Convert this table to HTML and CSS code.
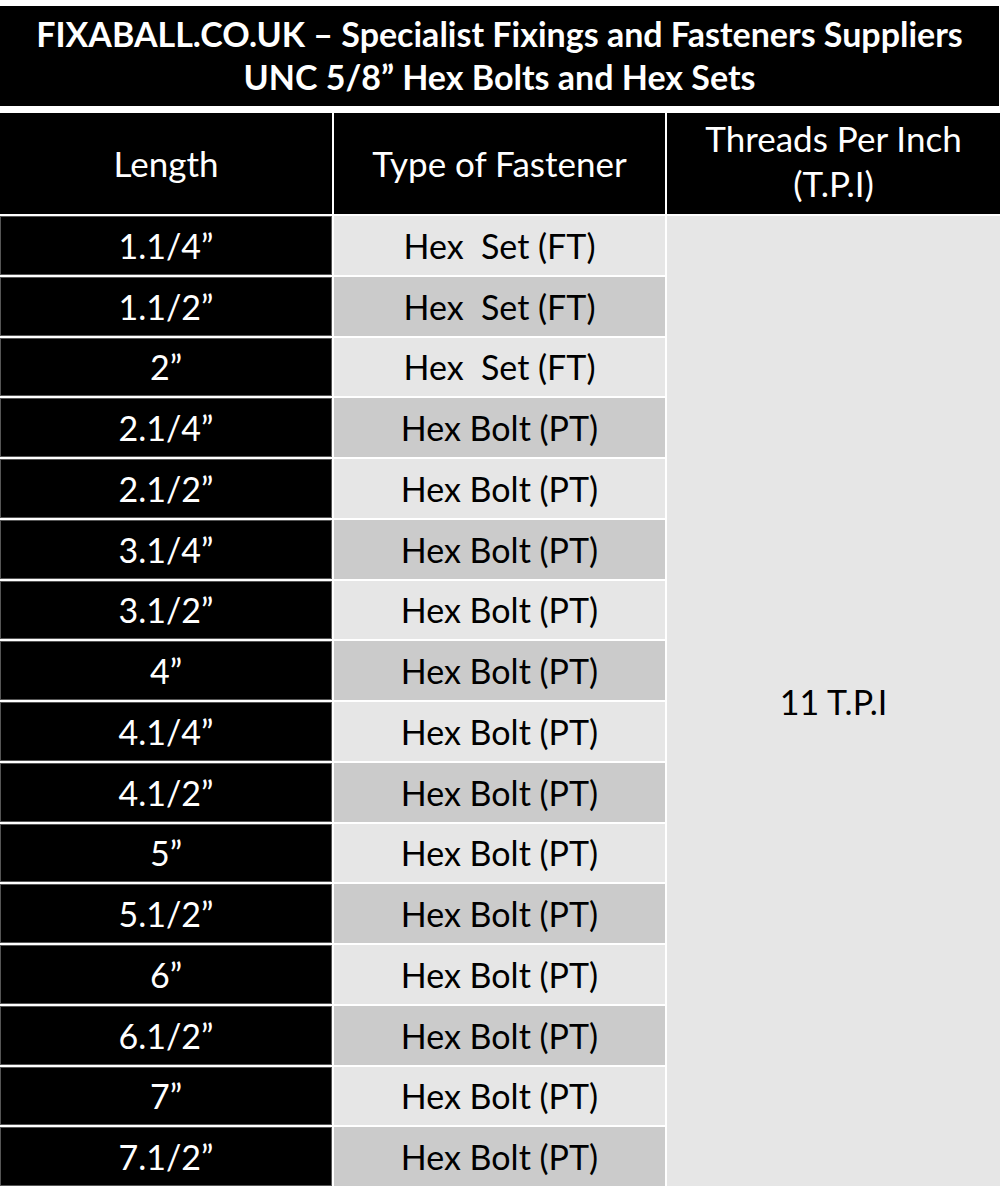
FILE: index.html
```html
<!DOCTYPE html>
<html lang="en">
<head>
<meta charset="utf-8">
<title>UNC 5/8" Hex Bolts and Hex Sets</title>
<link rel="stylesheet" href="styles.css">
</head>
<body>
<div class="sheet">
  <div class="title">
    <div>FIXABALL.CO.UK – Specialist Fixings and Fasteners Suppliers</div>
    <div>UNC 5/8” Hex Bolts and Hex Sets</div>
  </div>
  <div class="table">
    <div class="hd">Length</div>
    <div class="hd">Type of Fastener</div>
    <div class="hd hd-tpi">Threads Per Inch<br>(T.P.I)</div>

    <div class="len">1.1/4”</div><div class="type light">Hex&nbsp; Set (FT)</div>
    <div class="tpi">11 T.P.I</div>
    <div class="len">1.1/2”</div><div class="type dark">Hex&nbsp; Set (FT)</div>
    <div class="len">2”</div><div class="type light">Hex&nbsp; Set (FT)</div>
    <div class="len">2.1/4”</div><div class="type dark">Hex Bolt (PT)</div>
    <div class="len">2.1/2”</div><div class="type light">Hex Bolt (PT)</div>
    <div class="len">3.1/4”</div><div class="type dark">Hex Bolt (PT)</div>
    <div class="len">3.1/2”</div><div class="type light">Hex Bolt (PT)</div>
    <div class="len">4”</div><div class="type dark">Hex Bolt (PT)</div>
    <div class="len">4.1/4”</div><div class="type light">Hex Bolt (PT)</div>
    <div class="len">4.1/2”</div><div class="type dark">Hex Bolt (PT)</div>
    <div class="len">5”</div><div class="type light">Hex Bolt (PT)</div>
    <div class="len">5.1/2”</div><div class="type dark">Hex Bolt (PT)</div>
    <div class="len">6”</div><div class="type light">Hex Bolt (PT)</div>
    <div class="len">6.1/2”</div><div class="type dark">Hex Bolt (PT)</div>
    <div class="len">7”</div><div class="type light">Hex Bolt (PT)</div>
    <div class="len">7.1/2”</div><div class="type dark">Hex Bolt (PT)</div>
  </div>
</div>
</body>
</html>
```

FILE: styles.css
```css
html, body {
  margin: 0;
  padding: 0;
  background: #ffffff;
}
body {
  font-family: Lato, "Open Sans", "Liberation Sans", sans-serif;
}
.sheet {
  width: 1000px;
  padding-top: 6px;
}
.title {
  width: 999px;
  height: 100px;
  background: #000;
  color: #fff;
  font-weight: 700;
  font-size: 34px;
  line-height: 43px;
  display: flex;
  flex-direction: column;
  justify-content: center;
  align-items: center;
  margin-bottom: 7px;
  box-sizing: border-box;
  padding-bottom: 2px;
}
.table {
  display: grid;
  grid-template-columns: 332px 331px 333px;
  grid-template-rows: 101px repeat(16, 58.75px);
  gap: 2px;
}
.table > div {
  display: flex;
  align-items: center;
  justify-content: center;
  text-align: center;
  font-size: 34px;
}
.table > .hd {
  background: #000;
  color: #fff;
  font-size: 35px;
  line-height: 45px;
}
.hd-tpi {
  padding-bottom: 6px;
}
.len {
  background: #000;
  color: #fff;
  box-shadow: inset 0 0 0 1px #555;
}
.type {
  color: #000;
}
.light { background: #e6e6e6; }
.dark { background: #cbcbcb; }
.tpi {
  grid-column: 3;
  grid-row: 2 / span 16;
  background: #e6e6e6;
  color: #000;
}
```
